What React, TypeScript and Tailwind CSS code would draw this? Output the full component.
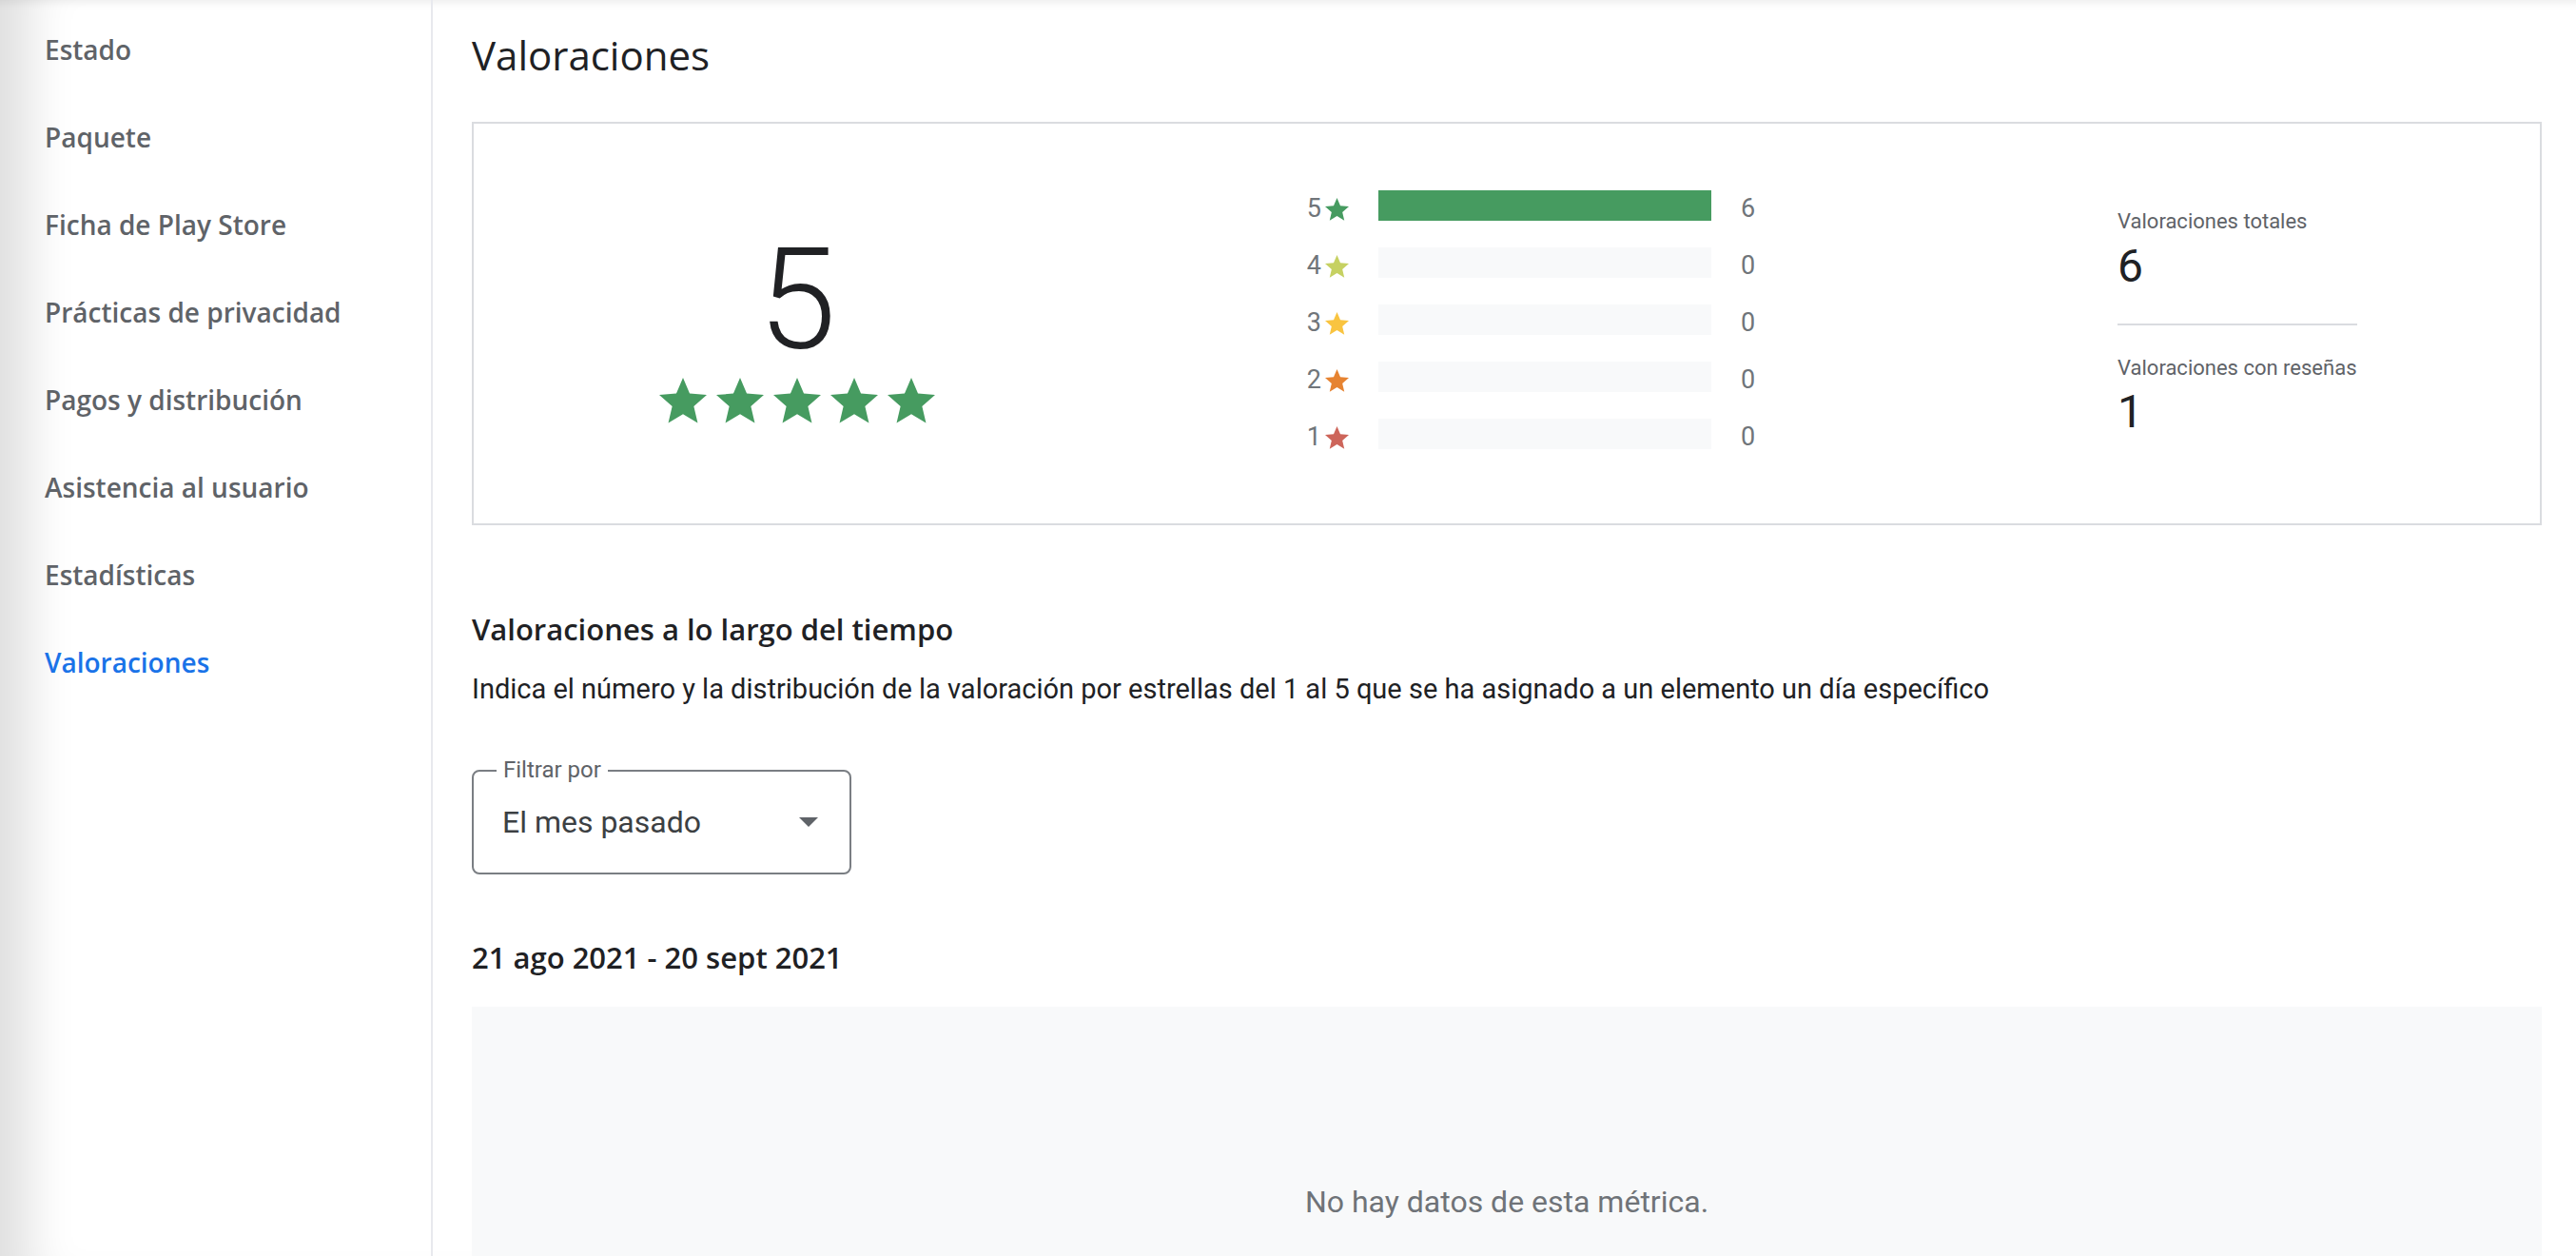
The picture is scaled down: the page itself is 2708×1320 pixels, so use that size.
const navItems = [
  'Estado',
  'Paquete',
  'Ficha de Play Store',
  'Prácticas de privacidad',
  'Pagos y distribución',
  'Asistencia al usuario',
  'Estadísticas',
  'Valoraciones',
];

const rows = [
  { n: 5, color: '#469b60', count: 6 },
  { n: 4, color: '#c6d162', count: 0 },
  { n: 3, color: '#f9c440', count: 0 },
  { n: 2, color: '#e68331', count: 0 },
  { n: 1, color: '#cd655a', count: 0 },
];

const Star = ({ size, color }: { size: number; color: string }) => (
  <svg width={size} height={size * 0.96} viewBox="2 2 20 19.2" className="shrink-0">
    <path
      d="M12 17.27 18.18 21 16.54 13.97 22 9.24 14.81 8.63 12 2 9.19 8.63 2 9.24 7.46 13.97 5.82 21z"
      fill={color}
    />
  </svg>
);

const gsans = "font-['Open_Sans','Noto_Sans',sans-serif]";
const roboto = "font-['Roboto','Liberation_Sans',sans-serif]";

export default function App() {
  return (
    <div className="relative flex h-[1320px] w-[2708px] overflow-hidden bg-white shadow-[inset_70px_0_50px_-40px_rgba(0,0,0,0.13),inset_0_12px_10px_-10px_rgba(0,0,0,0.08)]">
      {/* sidebar */}
      <aside className="flex w-[455px] shrink-0 flex-col border-r-2 border-[#e8e9ee] pt-[6px]">
        {navItems.map((item) => (
          <div
            key={item}
            className={`flex h-[92px] shrink-0 items-center pl-[47px] text-[28px] font-semibold ${gsans} ${
              item === 'Valoraciones' ? 'text-[#1a73e8]' : 'text-[#5f6368]'
            }`}
          >
            {item}
          </div>
        ))}
      </aside>

      {/* main */}
      <main className="block min-w-0 flex-1 pl-[41px] pr-[36px] pt-[28px]">
        <h1 className={`text-[42px] leading-[60px] font-normal text-[#202124] ${gsans}`}>Valoraciones</h1>

        <section className={`mt-[40px] flex h-[424px] items-start border-2 border-[#dadce0] ${roboto}`}>
          <div className="mt-[112px] flex w-[680px] flex-col items-center">
            <div className="text-[148px] leading-none font-light text-[#202124]">5</div>
            <div className="mt-[7px] flex gap-[10px]">
              {[0, 1, 2, 3, 4].map((i) => (
                <Star key={i} size={50} color="#469b60" />
              ))}
            </div>
          </div>

          <div className="ml-[195px] mt-[56px] flex flex-col">
            {rows.map((r) => (
              <div key={r.n} className="flex h-[60px] items-center text-[27px] text-[#70757a]">
                <span className="mt-[7px] w-[16px] text-right">{r.n}</span>
                <span className="ml-[4px] mt-[7px]">
                  <Star size={25} color={r.color} />
                </span>
                <div className="ml-[31px] h-[32px] w-[350px] bg-[#f8f9fa]">
                  {r.count > 0 && <div className="h-full w-full bg-[#469b60]" />}
                </div>
                <span className="ml-[31px] mt-[7px]">{r.count}</span>
              </div>
            ))}
          </div>

          <div className="ml-auto mr-[192px] mt-[89px] flex w-[252px] flex-col">
            <div className="text-[22px] leading-[28px] text-[#5f6368]">Valoraciones totales</div>
            <div className="mt-[8px] text-[48px] leading-[50px] text-[#202124]">6</div>
            <div className="mt-[35px] h-[2px] bg-[#dadce0]" />
            <div className="mt-[31px] text-[22px] leading-[28px] text-[#5f6368]">Valoraciones con reseñas</div>
            <div className="mt-[7px] text-[48px] leading-[50px] text-[#202124]">1</div>
          </div>
        </section>

        <h2 className={`mt-[89px] text-[31px] leading-[40px] font-semibold text-[#202124] ${gsans}`}>
          Valoraciones a lo largo del tiempo
        </h2>
        <p className={`mt-[23px] text-[29px] leading-[40px] text-[#202124] ${roboto}`}>
          Indica el número y la distribución de la valoración por estrellas del 1 al 5 que se ha asignado a un
          elemento un día específico
        </p>

        <div
          className={`relative mt-[65px] flex h-[110px] w-[399px] items-center justify-between rounded-[8px] border-2 border-[#7a7e83] pl-[30px] pr-[33px] ${roboto}`}
        >
          <span className="absolute left-[24px] top-[-16px] bg-white px-[7px] text-[24px] leading-[28px] text-[#5f6368]">
            Filtrar por
          </span>
          <span className="text-[32px] text-[#3c4043]">El mes pasado</span>
          <svg width="20" height="10" viewBox="0 0 20 10">
            <path d="M0 0h20L10 10z" fill="#5f6368" />
          </svg>
        </div>

        <h3 className={`mt-[67px] text-[31px] leading-[40px] font-semibold text-[#202124] ${gsans}`}>
          21 ago 2021 - 20 sept 2021
        </h3>

        <div className={`mt-[32px] flex h-[420px] justify-center bg-[#f8f9fa] pt-[186px] ${roboto}`}>
          <span className="text-[32px] leading-[38px] text-[#6f7378]">No hay datos de esta métrica.</span>
        </div>
      </main>
    </div>
  );
}
